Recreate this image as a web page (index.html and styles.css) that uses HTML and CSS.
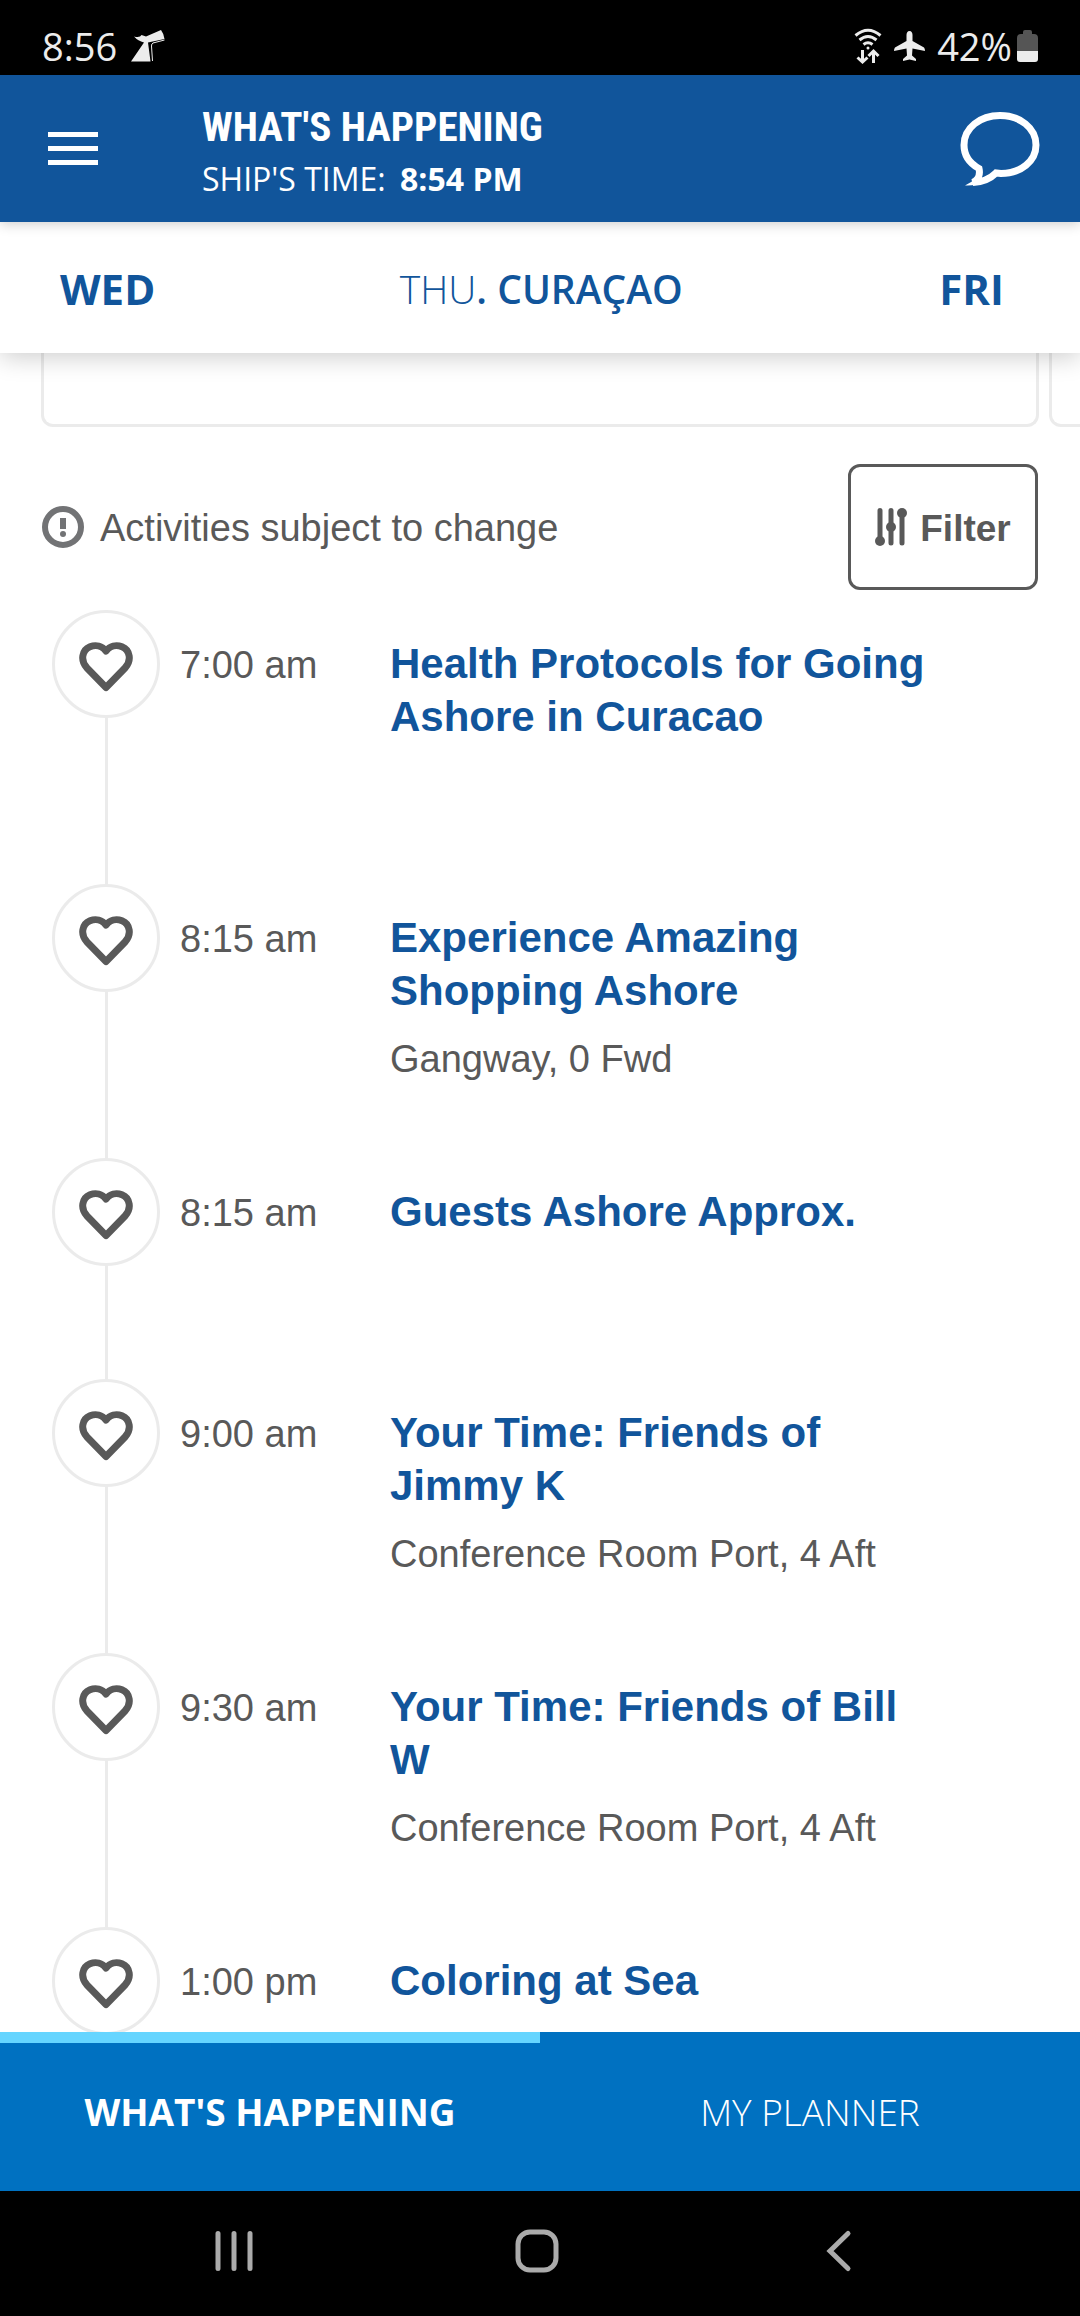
FILE: index.html
```
<!DOCTYPE html>
<html lang="en">
<head>
    <meta charset="UTF-8">
    <meta name="viewport" content="width=device-width, initial-scale=1.0">
    <title>What's Happening</title>
    <link rel="stylesheet" href="styles.css">
</head>
<body>
<svg class="sprite" aria-hidden="true">
    <symbol id="heart" viewBox="0 0 54 50">
        <path d="M27 45.500 L8 26 C1 18.500 3 8 11 4.800 C17 2.400 23 4 27 9 C31 4 37 2.400 43 4.800 C51 8 53 18.500 46 26 Z" fill="none" stroke="currentColor" stroke-width="7" stroke-linejoin="round"/>
    </symbol>
</svg>

<div class="status-bar">
    <div class="status-group">
        <span class="clock">8:56</span>
        <svg class="status-app" viewBox="0 0 34 32" fill="#ececec">
            <path d="M0 31.500 L13 12.500 Q7 11 3 6.500 Q9 8 10.500 5 L15 6.500 L30 0 Q33 4 33.500 9 L17 12.500 L19.500 31.500 Z"/>
            <path d="M33.500 10 L22 13 Q20.500 13.500 20.500 16 L21.500 31" fill="none" stroke="#ececec" stroke-width="1"/>
        </svg>
    </div>
    <div class="status-group">
        <svg class="status-wifi" viewBox="0 0 28 36" fill="none" stroke="#ececec">
            <path d="M1.500 7.500 Q14 -3 26.500 7.500" stroke-width="3"/>
            <path d="M5.500 12 Q14 5 22.500 12" stroke-width="3"/>
            <path d="M9.500 16.500 Q14 13 18.500 16.500" stroke-width="3"/>
            <circle cx="14" cy="20" r="1.500" fill="#ececec" stroke="none"/>
            <path d="M8.500 22 V34 M3.500 29.500 L8.500 34 L13.500 29.500 M19.500 35 V23 M14.500 28 L19.500 23 L24.500 28" stroke-width="3"/>
        </svg>
        <svg class="status-plane" viewBox="0 0 31 30" fill="#ececec">
            <path d="M15.500 0 C17.500 0 18.500 2 18.500 4 V10 L30 16.500 Q31 17.500 31 20 L18.500 17.500 L18 24.500 L22 28 V30 L15.500 28.500 L9 30 V28 L13 24.500 L12.500 17.500 L0 20 Q0 17.500 1 16.500 L12.500 10 V4 C12.500 2 13.500 0 15.500 0 Z"/>
        </svg>
        <span class="battery-level">42%</span>
        <svg class="status-battery" viewBox="0 0 21 32">
            <path d="M6 2 Q6 0 8 0 H13 Q15 0 15 2 V4 H17 Q21 4 21 8 V21 H0 V8 Q0 4 4 4 H6 Z" fill="#555"/>
            <path d="M0 21 H21 V29 Q21 32 18 32 H3 Q0 32 0 29 Z" fill="#ececec"/>
        </svg>
    </div>
</div>

<header class="header">
    <button class="icon-button" type="button" aria-label="Menu">
        <svg class="menu-icon" viewBox="0 0 50 34" fill="#fff">
            <rect width="50" height="5"/>
            <rect y="14" width="50" height="5"/>
            <rect y="28" width="50" height="5"/>
        </svg>
    </button>
    <div class="heading">
        <h1>WHAT'S HAPPENING</h1>
        <p>SHIP'S TIME: <strong>8:54 PM</strong></p>
    </div>
    <button class="icon-button" type="button" aria-label="Chat">
        <svg class="chat-icon" viewBox="0 0 80 74">
            <path d="M40 3.500 C60 3.500 76 16 76 33 C76 49 61 61.500 41 61.500 L36 61 C31 66 22 70 13 70.500 C18 68 20.500 63 19 56.500 C9 51 4 43 4 33 C4 16 20 3.500 40 3.500 Z" fill="none" stroke="#fff" stroke-width="7"/>
            <path d="M5 73.500 Q12 70 16 66 L24 70 Q16 74 5 73.500 Z" fill="#fff"/>
        </svg>
    </button>
</header>

<nav class="days">
    <a href="#wed">WED</a>
    <a class="current" href="#thu"><span>THU</span>. CURAÇAO</a>
    <a href="#fri">FRI</a>
</nav>

<main class="content">
    <div class="carousel">
        <div class="card"></div>
        <div class="card"></div>
    </div>

    <div class="toolbar">
        <p class="notice">
            <svg class="notice-icon" viewBox="0 0 42 42">
                <circle cx="21" cy="21" r="18" fill="none" stroke="#727375" stroke-width="6"/>
                <rect x="18" y="12" width="6" height="11" fill="#727375"/>
                <circle cx="21" cy="28" r="3" fill="#727375"/>
            </svg>
            <span>Activities subject to change</span>
        </p>
        <button class="filter" type="button">
            <svg class="filter-icon" viewBox="0 0 32 38" fill="#595959" stroke="#595959">
                <path d="M5 2.500 V33 M16 2.500 V35 M27 5 V35" stroke-width="5" stroke-linecap="round"/>
                <circle cx="5" cy="33" r="5" stroke="none"/>
                <circle cx="16" cy="19" r="5" stroke="none"/>
                <circle cx="27" cy="5" r="5" stroke="none"/>
            </svg>
            <span>Filter</span>
        </button>
    </div>

    <ul class="timeline">
        <li class="event">
            <button class="favorite" type="button" aria-label="Add to planner"><svg><use href="#heart"/></svg></button>
            <time class="time">7:00 am</time>
            <div class="details">
                <h2><a href="#health">Health Protocols for Going Ashore in Curacao</a></h2>
                <p></p>
            </div>
        </li>
        <li class="event">
            <button class="favorite" type="button" aria-label="Add to planner"><svg><use href="#heart"/></svg></button>
            <time class="time">8:15 am</time>
            <div class="details">
                <h2><a href="#shopping">Experience Amazing Shopping Ashore</a></h2>
                <p>Gangway, 0 Fwd</p>
            </div>
        </li>
        <li class="event">
            <button class="favorite" type="button" aria-label="Add to planner"><svg><use href="#heart"/></svg></button>
            <time class="time">8:15 am</time>
            <div class="details">
                <h2><a href="#ashore">Guests Ashore Approx.</a></h2>
                <p></p>
            </div>
        </li>
        <li class="event">
            <button class="favorite" type="button" aria-label="Add to planner"><svg><use href="#heart"/></svg></button>
            <time class="time">9:00 am</time>
            <div class="details">
                <h2><a href="#jimmy-k">Your Time: Friends of Jimmy K</a></h2>
                <p>Conference Room Port, 4 Aft</p>
            </div>
        </li>
        <li class="event">
            <button class="favorite" type="button" aria-label="Add to planner"><svg><use href="#heart"/></svg></button>
            <time class="time">9:30 am</time>
            <div class="details">
                <h2><a href="#bill-w">Your Time: Friends of Bill W</a></h2>
                <p>Conference Room Port, 4 Aft</p>
            </div>
        </li>
        <li class="event">
            <button class="favorite" type="button" aria-label="Add to planner"><svg><use href="#heart"/></svg></button>
            <time class="time">1:00 pm</time>
            <div class="details">
                <h2><a href="#coloring">Coloring at Sea</a></h2>
            </div>
        </li>
    </ul>
</main>

<nav class="tabs">
    <a class="active" href="#happening">WHAT'S HAPPENING</a>
    <a href="#planner">MY PLANNER</a>
</nav>

<div class="system-nav">
    <button type="button" aria-label="Recent apps">
        <svg viewBox="0 0 44 44"><path d="M6 4.500 V39.500 M22 4.500 V39.500 M38 4.500 V39.500"/></svg>
    </button>
    <button type="button" aria-label="Home">
        <svg viewBox="0 0 44 44"><rect x="3" y="3" width="38" height="38" rx="12"/></svg>
    </button>
    <button type="button" aria-label="Back">
        <svg viewBox="0 0 44 44"><path d="M31 4.500 L13 22 L31 39.500"/></svg>
    </button>
</div>
</body>
</html>
```
FILE: styles.css
```
* {
    box-sizing: border-box;
}

body {
    display: flex;
    flex-direction: column;
    height: 100vh;
    margin: 0;
    background-color: #fff;
    color: #595959;
    font-family: "Liberation Sans", Arial, sans-serif;
    font-size: 38px;
}

h1, h2, p, ul {
    margin: 0;
    padding: 0;
}

a {
    color: inherit;
    text-decoration: none;
}

button {
    padding: 0;
    border: none;
    background: none;
    color: inherit;
    font: inherit;
    cursor: pointer;
}

svg {
    display: block;
    flex: none;
}

.sprite {
    display: none;
}

/* phone status bar */
.status-bar {
    display: flex;
    justify-content: space-between;
    align-items: center;
    flex: none;
    height: 75px;
    padding: 16px 42px 0;
    background-color: #000;
    color: #ececec;
    font-family: "Open Sans", sans-serif;
    font-size: 38px;
}

.status-group {
    display: flex;
    align-items: center;
    gap: 5px;
}

.status-app {
    width: 34px;
    height: 32px;
    margin-left: 9px;
}

.status-wifi {
    width: 28px;
    height: 36px;
}

.status-plane {
    width: 31px;
    height: 30px;
    margin: 0 7px;
}

.status-battery {
    width: 21px;
    height: 32px;
}

/* app header */
.header {
    display: flex;
    align-items: center;
    position: relative;
    z-index: 3;
    flex: none;
    height: 147px;
    padding: 0 40px 0 48px;
    background-color: #11559b;
    color: #fff;
    box-shadow: 0 2px 12px rgba(0, 0, 0, 0.2);
    font-family: "Open Sans", sans-serif;
}

.heading {
    flex: 1;
    margin-left: 104px;
    padding-top: 4px;
}

.heading h1 {
    font-family: "Roboto Condensed", "Open Sans Condensed", "Liberation Sans Narrow", sans-serif;
    font-size: 41px;
    line-height: 56px;
}

.heading p {
    font-size: 32px;
    line-height: 48px;
}

.heading strong {
    margin-left: 6px;
}

.menu-icon {
    width: 50px;
    height: 34px;
}

.chat-icon {
    width: 80px;
    height: 74px;
}

/* day switcher */
.days {
    display: flex;
    justify-content: space-between;
    align-items: center;
    position: relative;
    z-index: 2;
    flex: none;
    height: 131px;
    padding: 2px 76px 0 60px;
    background-color: #fff;
    color: #11559b;
    box-shadow: 0 4px 24px rgba(0, 0, 0, 0.2);
    font-family: "Open Sans", sans-serif;
    font-size: 42px;
    font-weight: bold;
}

.days .current {
    padding-right: 12px;
    font-size: 39px;
    font-weight: 600;
}

.days span {
    font-weight: 300;
}

.content {
    flex: 1;
    min-height: 0;
    overflow: hidden;
}

.carousel {
    display: flex;
    gap: 10px;
    height: 74px;
    padding-left: 41px;
    overflow: hidden;
}

.card {
    flex: none;
    width: calc(100% - 41px);
    border: 3px solid #ebebeb;
    border-top: none;
    border-radius: 0 0 12px 12px;
}

.toolbar {
    display: flex;
    justify-content: space-between;
    align-items: center;
    padding: 37px 42px 20px;
}

.toolbar span {
    padding-top: 3px;
}

.notice {
    display: flex;
    align-items: center;
    gap: 16px;
}

.notice-icon {
    width: 42px;
    height: 42px;
}

.filter {
    display: flex;
    justify-content: center;
    align-items: center;
    gap: 13px;
    width: 190px;
    height: 126px;
    border: 3px solid #595959;
    border-radius: 12px;
    font-size: 37px;
    font-weight: bold;
}

.filter-icon {
    width: 32px;
    height: 38px;
}

/* timeline */
.timeline {
    list-style: none;
}

.event {
    display: grid;
    grid-template-columns: 108px 190px 1fr;
    column-gap: 20px;
    padding: 0 145px 0 52px;
    /* vertical line behind the heart buttons */
    background: linear-gradient(#ebebeb, #ebebeb) 105px 0 / 3px 100% no-repeat;
}

.favorite {
    display: flex;
    justify-content: center;
    align-items: center;
    width: 108px;
    height: 108px;
    padding-top: 5px;
    border: 3px solid #ebebeb;
    border-radius: 50%;
    background-color: #fff;
}

.favorite svg {
    width: 54px;
    height: 50px;
}

.time {
    padding-top: 29px;
    line-height: 53px;
}

.details {
    padding: 27px 0 72px;
}

.details h2 {
    color: #11559b;
    font-size: 42px;
    line-height: 53px;
}

.details p {
    min-height: 53px;
    margin-top: 16px;
    line-height: 53px;
}

/* bottom tabs */
.tabs {
    display: flex;
    flex: none;
    height: 159px;
    background-color: #0071c1;
    color: #fff;
    font-family: "Open Sans", sans-serif;
    font-size: 37px;
    font-weight: 300;
}

.tabs a {
    display: flex;
    flex: 1;
    justify-content: center;
    align-items: center;
    border-top: 11px solid transparent;
    padding-bottom: 12px;
}

.tabs .active {
    border-top-color: #66d5ff;
    font-weight: bold;
}

.system-nav {
    display: flex;
    justify-content: space-between;
    align-items: center;
    flex: none;
    height: 125px;
    padding: 0 219px 6px 212px;
    background-color: #000;
}

.system-nav svg {
    width: 44px;
    height: 44px;
    fill: none;
    stroke: #ababab;
    stroke-width: 5;
    stroke-linecap: round;
}
```
